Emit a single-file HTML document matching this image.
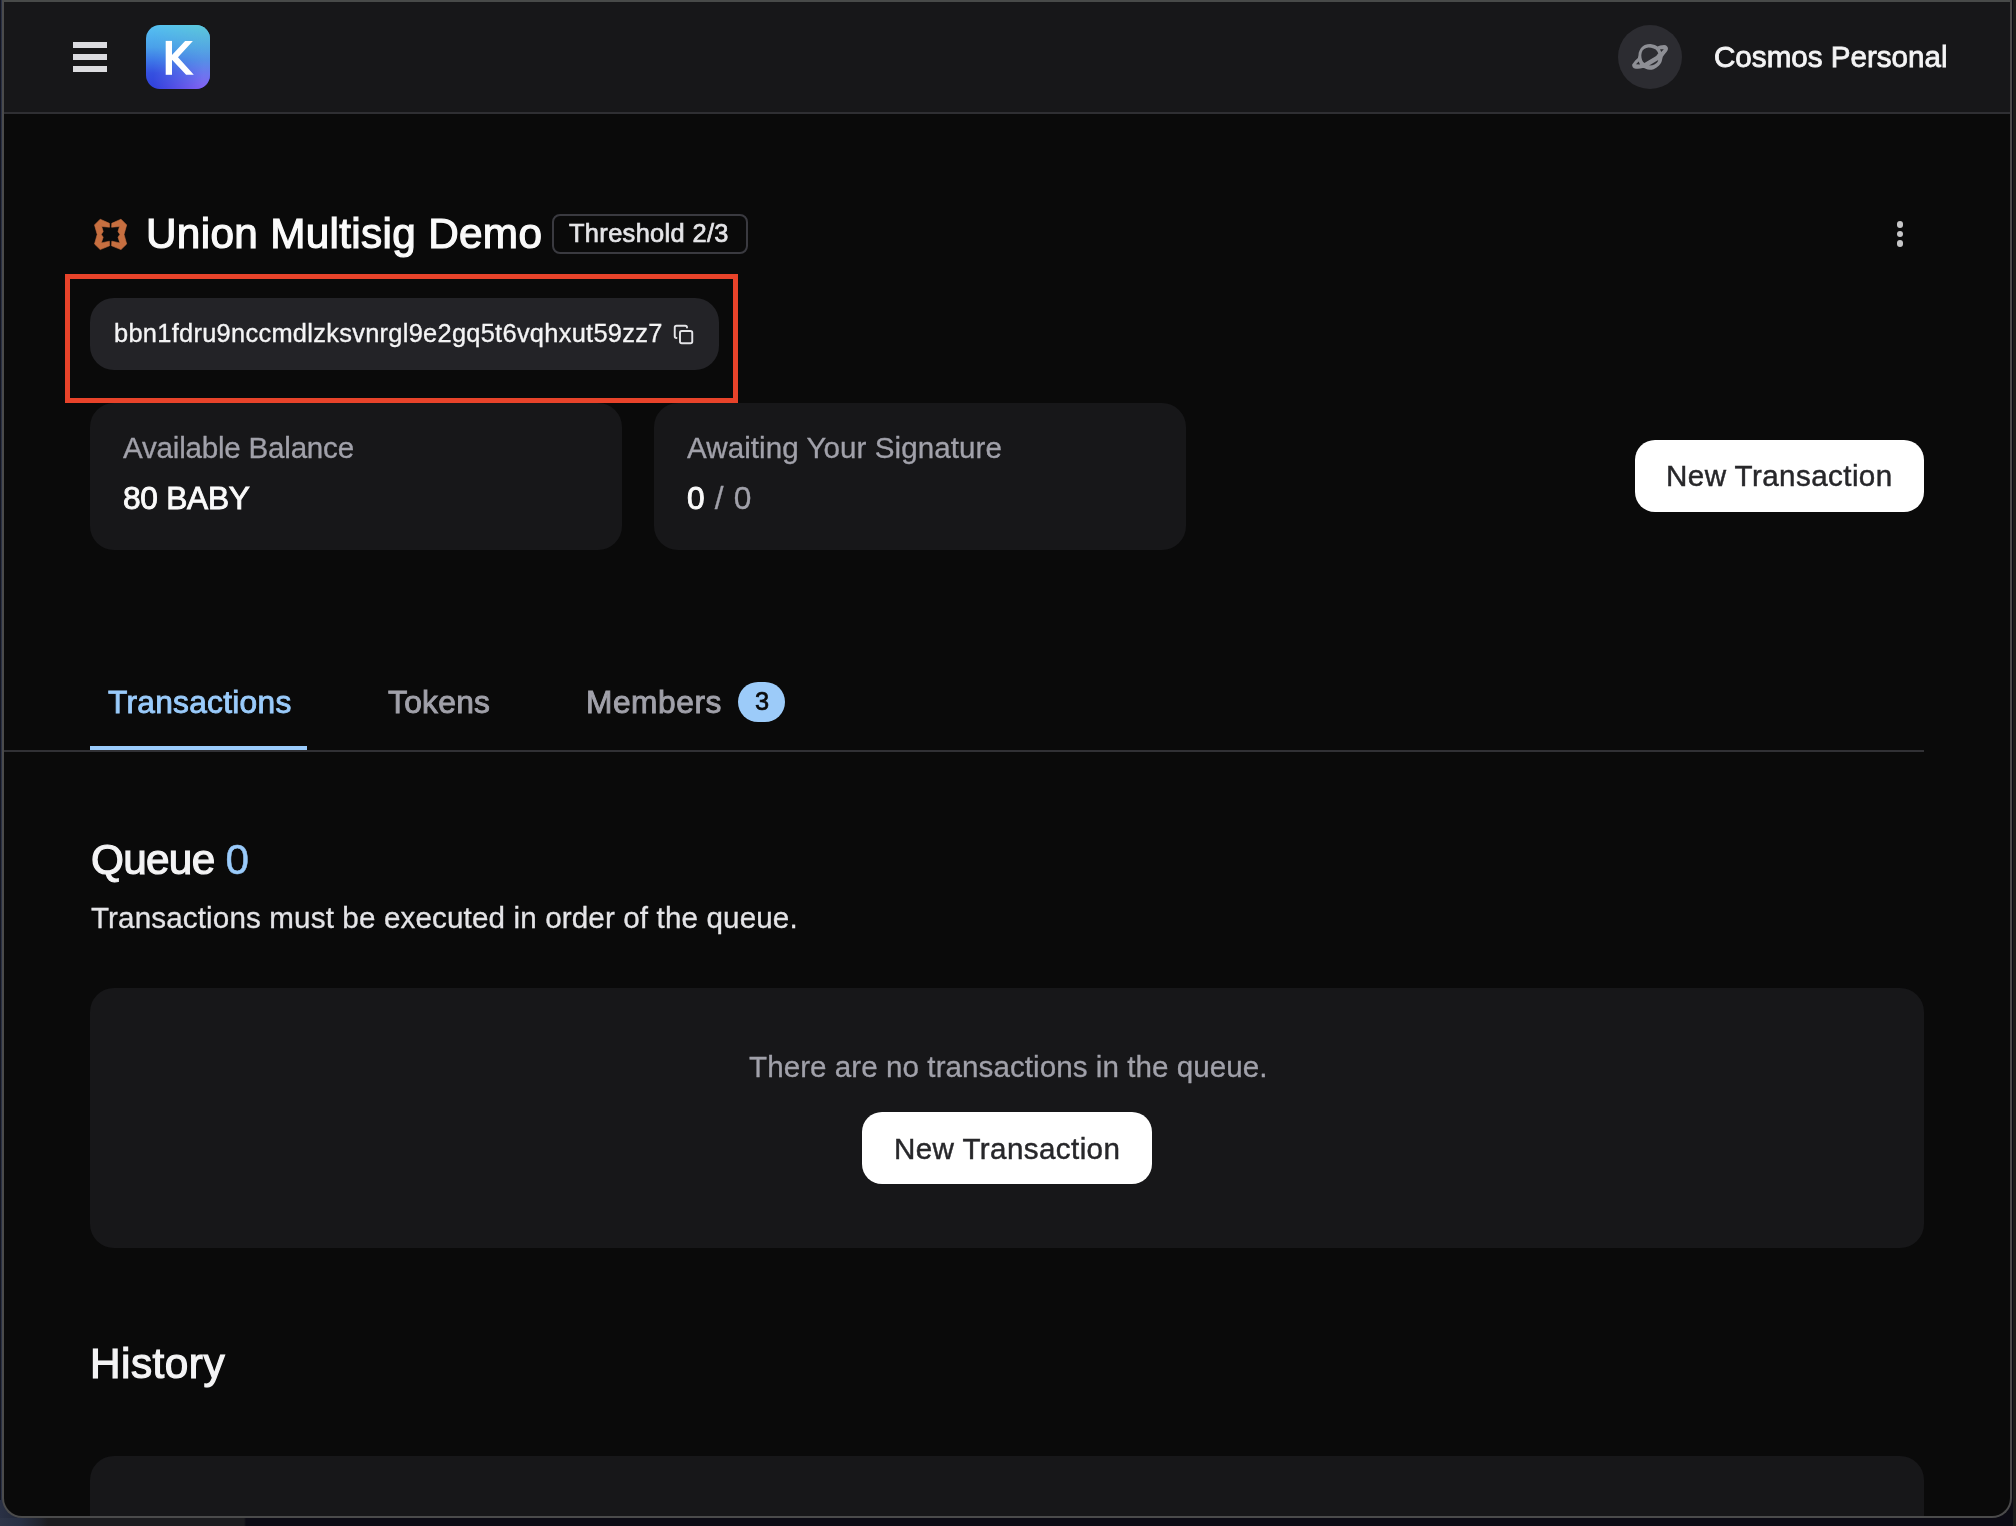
<!DOCTYPE html>
<html>
<head>
<meta charset="utf-8">
<style>
html,body{margin:0;padding:0;width:2016px;height:1526px;overflow:hidden;background:#0c0c12;}
*{box-sizing:border-box;}
body{font-family:"Liberation Sans",sans-serif;position:relative;}
.abs{position:absolute;}
.t{position:absolute;white-space:nowrap;line-height:1;font-weight:400;will-change:transform;}
#desk{position:absolute;left:0;top:0;width:2016px;height:1526px;}
#win{position:absolute;left:2px;top:0;width:2010px;height:1518px;border:2px solid #4b4b4b;border-top-color:#484a49;border-radius:0 0 20px 20px;background:#0a0a0a;overflow:hidden;}
#pg{position:absolute;left:-4px;top:-2px;width:2016px;height:1526px;}
#hdr{position:absolute;left:0;top:2px;width:2016px;height:112px;background:#171719;border-bottom:2px solid #2f2f33;}
.card{position:absolute;background:#171719;border-radius:24px;}
.btn{position:absolute;background:#fff;border-radius:20px;}
</style>
</head>
<body>
<div id="desk" style="background:linear-gradient(90deg,#2a3145 0px,#1f2433 30px,#131520 44px,#0c0b14 60px);">
  <div class="abs" style="left:0;top:0;width:1px;height:1500px;background:#141520"></div>
  <div class="abs" style="left:0;top:1518px;width:2016px;height:8px;background:linear-gradient(90deg,#2e3548 0px,#283044 20px,#20232d 40px,#1c1c1f 48px,#1c1c1f 244px,#0c0b14 246px,#0c0b14 2016px);"></div>
  <div class="abs" style="left:2013px;top:0;width:3px;height:1526px;background:#1c1c1a"></div>
</div>
<div id="win">
<div id="pg">
  <div id="hdr"></div>

  <!-- hamburger -->
  <div class="abs" style="left:73px;top:42.1px;width:34px;height:5.5px;background:#dcdce0"></div>
  <div class="abs" style="left:73px;top:54.2px;width:34px;height:5.5px;background:#dcdce0"></div>
  <div class="abs" style="left:73px;top:66.3px;width:34px;height:5.5px;background:#dcdce0"></div>

  <!-- K logo -->
  <div class="abs" style="left:146px;top:25px;width:64px;height:64px;border-radius:14px;overflow:hidden;background:linear-gradient(180deg,#56c2f2 0%,#4aa0ea 35%,#3d78e8 55%,#3550e0 75%,#3040dc 100%);">
    <div class="abs" style="left:0;top:0;width:64px;height:64px;background:linear-gradient(180deg,#5cc8da 0%,#54a8e2 35%,#5590e6 55%,#6a78ee 75%,#8560f2 100%);-webkit-mask-image:linear-gradient(90deg,transparent 10%,#000 90%);mask-image:linear-gradient(90deg,transparent 10%,#000 90%);"></div>
    <svg class="abs" style="left:0;top:0" width="64" height="64" viewBox="0 0 64 64"><rect x="19.7" y="15.9" width="6.3" height="33.9" fill="#fff"/><polygon points="26,29.9 39.1,15.9 46.9,15.9 32,32.3 47.8,49.8 40.1,49.8 26,34.8" fill="#fff"/></svg>
  </div>

  <!-- avatar -->
  <div class="abs" style="left:1618px;top:25px;width:64px;height:64px;border-radius:50%;background:#2c2c31;"></div>
  <svg class="abs" style="left:1630px;top:37px" width="40" height="40" viewBox="0 0 40 40"><path fill="#8e8f95" fill-rule="evenodd" d="M2.2 27.5 L5.2 23.6 L7.9 21 L8.5 18 L8.7 15.7 L9.8 13 L11 11 L12.8 9.3 L14.7 8.1 L17.5 7.3 L20.4 7.1 L22.8 7.4 L24.9 8.1 L26.3 8.7 L27.5 9.4 L30.1 8.6 L34.1 7.9 L35.7 8.2 L36.7 8.9 L37.7 10.2 L38 11.8 L37.6 13.2 L36.7 14.7 L34.8 17 L32.8 19.7 L32.2 22.3 L31.5 24.9 L30.3 27 L28.8 28.8 L26.3 30.7 L23.6 32.2 L21.7 32.7 L19.9 32.8 L17.7 32.4 L15.7 31.7 L14 31.1 L12.6 30.9 L10.3 31.4 L7.9 31.7 L5.8 31.7 L3.9 31.2 L2.8 30.2 L2.2 28.8Z M11.3 18.3 L11.7 15.8 L12.6 13.6 L14.2 12 L16.3 11 L18.6 10.6 L21 10.7 L23.5 11.4 L25.7 12.6 L27.2 14.3 L28.3 16.3 L26.2 18.9 L14.4 26 L13 24.8 L12.1 23.1 L11.5 20.8Z M6 27.3 L8.65 24.6 L10 27.5Z M30.1 12.3 L33.8 12.3 L31.2 14.9Z M19.1 28.4 L28.3 23.1 L27.5 24.9 L26.2 26.2 L24.3 27.5 L22.3 28.3Z"/></svg>

  <!-- babylon icon -->
  <svg class="abs" style="left:94px;top:218px" width="34" height="34" viewBox="0 0 34 34">
  <g fill="#c76f40" stroke="#c76f40" stroke-width="0.6" stroke-linejoin="round">
  <polygon points="0.5,6.9 6.2,1.2 15.4,5.3 15.6,9.2 7.7,8.5 9.2,13.6 7.3,16.4 9.2,19.2 7.3,24.9 15.4,23.2 15.6,27.8 6.2,31.6 0.5,26 3.2,16.4"/>
  <polygon points="32.7,6.9 27.0,1.2 17.8,5.3 17.6,9.2 25.5,8.5 24.0,13.6 25.9,16.4 24.0,19.2 25.9,24.9 17.8,23.2 17.6,27.8 27.0,31.6 32.7,26.0 30.0,16.4"/>
  </g></svg>

  <!-- threshold badge -->
  <div class="abs" style="left:552px;top:214px;width:196px;height:40px;border:2px solid #3a3a40;border-radius:8px;"></div>

  <!-- kebab -->
  <div class="abs" style="left:1896.7px;top:221px;width:6.6px;height:6.6px;border-radius:50%;background:#c6c6c8"></div>
  <div class="abs" style="left:1896.7px;top:230.6px;width:6.6px;height:6.6px;border-radius:50%;background:#c6c6c8"></div>
  <div class="abs" style="left:1896.7px;top:240.2px;width:6.6px;height:6.6px;border-radius:50%;background:#c6c6c8"></div>

  <!-- address pill -->
  <div class="abs" style="left:90px;top:298px;width:629px;height:72px;border-radius:24px;background:#232327;"></div>
  <svg class="abs" style="left:673px;top:324px" width="21" height="21" viewBox="0 0 24 24" fill="none" stroke="#e4e4e7" stroke-width="2.2" stroke-linecap="round" stroke-linejoin="round"><rect width="14" height="14" x="8" y="8" rx="2" ry="2"/><path d="M4 16c-1.1 0-2-.9-2-2V4c0-1.1.9-2 2-2h10c1.1 0 2 .9 2 2"/></svg>

  <!-- cards -->
  <div class="card" style="left:90px;top:403px;width:532px;height:147px;"></div>
  <div class="card" style="left:654px;top:403px;width:532px;height:147px;"></div>

  <!-- red highlight -->
  <div class="abs" style="left:65px;top:274px;width:673px;height:129px;border:5px solid #e8432a;"></div>

  <div class="btn" style="left:1635px;top:440px;width:289px;height:72px;"></div>

  <!-- tabs -->
  <div class="abs" style="left:738px;top:682px;width:47px;height:40px;border-radius:20px;background:#9ccbf9;"></div>
  <div class="abs" style="left:4px;top:750px;width:1920px;height:2px;background:#313135;"></div>
  <div class="abs" style="left:90px;top:746px;width:217px;height:4px;background:#9acbfb;"></div>

  <!-- queue box -->
  <div class="card" style="left:90px;top:988px;width:1834px;height:260px;"></div>
  <div class="btn" style="left:862px;top:1112px;width:290px;height:72px;"></div>

  <!-- history box -->
  <div class="card" style="left:90px;top:1456px;width:1834px;height:200px;"></div>

<div class="t" id="cosmos" style="left:1714.0px;top:42px;font-size:29.6px;color:#f4f4f5;-webkit-text-stroke:0.8px #f4f4f5;">Cosmos Personal</div>
<div class="t" id="union" style="left:146.0px;top:213px;font-size:42.3px;color:#fafafa;letter-spacing:0.317px;-webkit-text-stroke:1.2px #fafafa;">Union Multisig Demo</div>
<div class="t" id="thresh" style="left:569.2px;top:221px;font-size:25.4px;color:#e4e4e7;letter-spacing:0.35px;-webkit-text-stroke:0.7px #e4e4e7;">Threshold 2/3</div>
<div class="t" id="addr" style="left:113.6px;top:321px;font-size:25.4px;color:#f4f4f5;letter-spacing:0.293px;-webkit-text-stroke:0.35px #f4f4f5;">bbn1fdru9nccmdlzksvnrgl9e2gq5t6vqhxut59zz7</div>
<div class="t" id="avail" style="left:123.0px;top:433px;font-size:29.6px;color:#a1a1aa;letter-spacing:-0.225px;-webkit-text-stroke:0.3px #a1a1aa;">Available Balance</div>
<div class="t" id="baby" style="left:122.8px;top:483px;font-size:31.7px;color:#fafafa;letter-spacing:-0.266px;-webkit-text-stroke:0.9px #fafafa;">80 BABY</div>
<div class="t" id="await" style="left:687px;top:433px;font-size:29.6px;color:#a1a1aa;letter-spacing:0.054px;-webkit-text-stroke:0.3px #a1a1aa;">Awaiting Your Signature</div>
<div class="t" id="zero" style="left:687px;top:483px;font-size:31.7px;color:#fafafa;letter-spacing:0.7px;-webkit-text-stroke:0.9px #fafafa;">0 <span style="color:#a1a1aa;-webkit-text-stroke:0.3px #a1a1aa">/ 0</span></div>
<div class="t" id="newtx1" style="left:1666.0px;top:461px;font-size:29.6px;color:#27272a;letter-spacing:0.414px;-webkit-text-stroke:0.45px #27272a;">New Transaction</div>
<div class="t" id="tabtx" style="left:107.6px;top:687px;font-size:31.7px;color:#9acbfb;letter-spacing:0.273px;-webkit-text-stroke:0.9px #9acbfb;">Transactions</div>
<div class="t" id="tokens" style="left:387.8px;top:687px;font-size:31.7px;color:#a1a1aa;letter-spacing:0.3px;-webkit-text-stroke:0.9px #a1a1aa;">Tokens</div>
<div class="t" id="members" style="left:585.8px;top:687px;font-size:31.7px;color:#a1a1aa;letter-spacing:0.55px;-webkit-text-stroke:0.9px #a1a1aa;">Members</div>
<div class="t" id="three" style="left:755px;top:688.5px;font-size:25.4px;color:#0a0a0a;-webkit-text-stroke:0.7px #0a0a0a;">3</div>
<div class="t" id="queue" style="left:90.6px;top:839px;font-size:42.3px;color:#f4f4f5;letter-spacing:-0.699px;-webkit-text-stroke:1.2px #f4f4f5;">Queue <span style="color:#9acbfb;-webkit-text-stroke:0.5px #9acbfb">0</span></div>
<div class="t" id="must" style="left:90.8px;top:903px;font-size:29.6px;color:#e4e4e7;letter-spacing:0.137px;-webkit-text-stroke:0.3px #e4e4e7;">Transactions must be executed in order of the queue.</div>
<div class="t" id="notx" style="left:749.4px;top:1052px;font-size:29.6px;color:#a1a1aa;letter-spacing:0.053px;-webkit-text-stroke:0.3px #a1a1aa;">There are no transactions in the queue.</div>
<div class="t" id="newtx2" style="left:893.6px;top:1134px;font-size:29.6px;color:#27272a;letter-spacing:0.393px;-webkit-text-stroke:0.45px #27272a;">New Transaction</div>
<div class="t" id="history" style="left:90.4px;top:1343px;font-size:42.3px;color:#f4f4f5;letter-spacing:0.501px;-webkit-text-stroke:1.2px #f4f4f5;">History</div>
</div>
</div>
</body>
</html>
